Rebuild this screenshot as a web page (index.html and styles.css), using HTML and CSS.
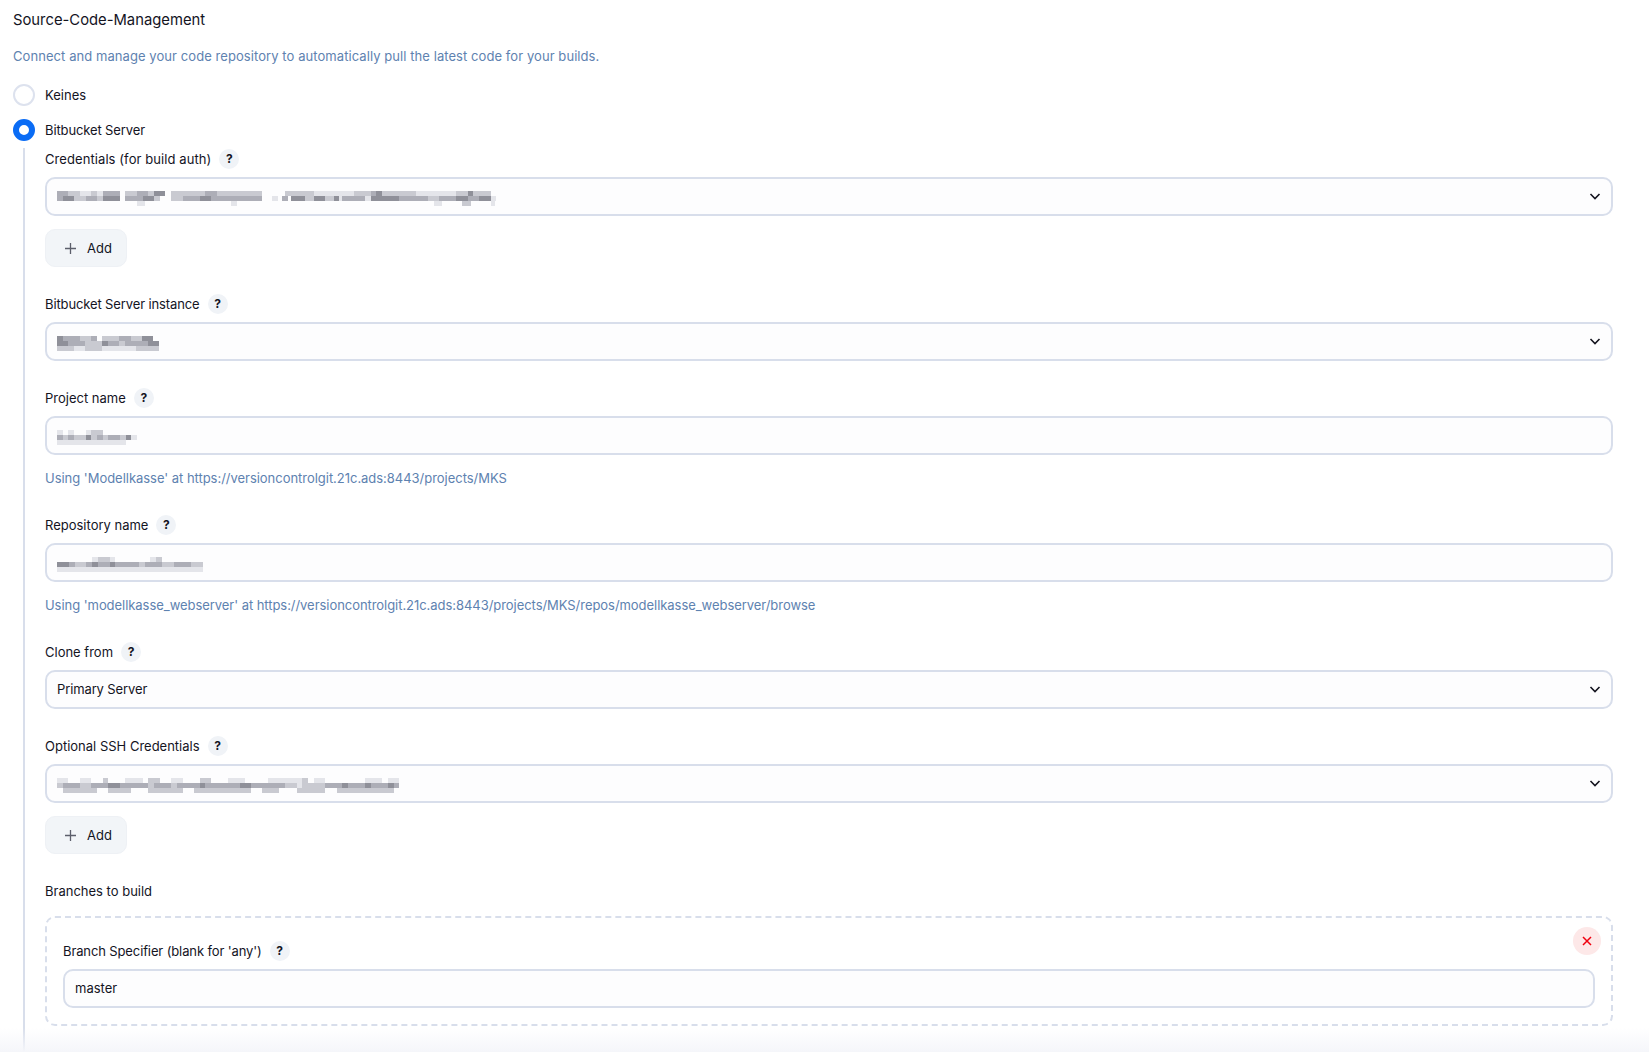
FILE: index.html
```html
<!DOCTYPE html>
<html lang="de">
<head>
<meta charset="utf-8">
<title>Source-Code-Management</title>
<link rel="stylesheet" href="styles.css">
</head>
<body>
<main class="page">
  <h2 class="title">Source-Code-Management</h2>
  <p class="desc">Connect and manage your code repository to automatically pull the latest code for your builds.</p>
  <div class="radio-row"><span class="radio"></span><span>Keines</span></div>
  <div class="radio-row checked"><span class="radio"></span><span class="tight">Bitbucket Server</span></div>
  <div class="nested">
    <div class="field">
      <div class="label"><span class="wide">Credentials (for build auth)</span> <span class="help">?</span></div>
      <div class="control select">
        <svg class="mask" width="445" height="20" viewBox="0 0 78 4" preserveAspectRatio="none">
          <path class="t1" d="M1 2.5h2M8 2.5h3M15 2.5h2M17 1.5h2M25 2.5h2M41 2.5h2.5M45 2.5h2M48.5 2.5h1M56 1.5h1M55 2.5h5M70 2.5h2M72 1.5h1M74 2.5h2"/>
          <path class="t2" d="M0 1.5h2M0 2.5h1M5 2.5h2M8 1.5h3M12 2.5h3M14 1.5h2M26 1.5h2M22 2.5h3M27 2.5h9M39.5 2.5h1M50 2.5h4M55 1.5h1M60 2.5h5M67 2.5h3M72 2.5h2"/>
          <path class="t3" d="M2 1.5h2M6 1.5h1M3 2.5h2M7 2.5h1M12 1.5h2M16 1.5h1M17 2.5h1M20 1.5h6M20 2.5h2M28 1.5h8M40 1.5h5M43.5 2.5h1.5M47 2.5h1.5M52 1.5h3M57 1.5h6M65 2.5h2M70 1.5h2M73 1.5h3M71 3.5h1.5"/>
          <path class="t4" d="M4 1.5h2M7 1.5h1M37.7 2.5h1M45 1.5h7M49.5 2.5h.5M54 2.5h1M63 1.5h7M76 2.5h1M14 3.5h1.5M30.5 3.5h1M66 3.5h1.5M76 3.5h.7"/>
        </svg>
        <svg class="chev" width="12" height="12" viewBox="0 0 12 12"><path d="M1.5 4l4.5 4.5L10.5 4"/></svg>
      </div>
      <button class="add"><svg class="plus" width="13" height="13" viewBox="0 0 13 13"><path d="M6.5 1v11M1 6.5h11"/></svg>Add</button>
    </div>
    <div class="field">
      <div class="label"><span class="tight">Bitbucket Server instance</span> <span class="help">?</span></div>
      <div class="control select">
        <svg class="mask" width="102" height="20" viewBox="0 0 18 4" preserveAspectRatio="none">
          <path class="t1" d="M0 1.5h1M0 2.5h2M8 2.5h1M15 1.5h2M16 2.5h2"/>
          <path class="t2" d="M1 1.5h3M2 2.5h3M6 1.5h1M9 2.5h2M11 1.5h2M12 2.5h4"/>
          <path class="t3" d="M4 1.5h2M8 1.5h3M13 1.5h2M5 2.5h3M11 2.5h1M0 3.5h3M5 3.5h3M14 3.5h4"/>
          <path class="t4" d="M3 3.5h2M8 3.5h6"/>
        </svg>
        <svg class="chev" width="12" height="12" viewBox="0 0 12 12"><path d="M1.5 4l4.5 4.5L10.5 4"/></svg>
      </div>
    </div>
    <div class="field">
      <div class="label">Project name <span class="help">?</span></div>
      <div class="control">
        <svg class="mask" width="80" height="20" viewBox="0 0 14 4" preserveAspectRatio="none">
          <path class="t1" d="M5 2.5h1M12 2.5h1"/>
          <path class="t2" d="M0 2.5h1M2 2.5h1M7 2.5h1M9 2.5h2"/>
          <path class="t3" d="M1 2.5h1M3 2.5h2M6 2.5h1M8 2.5h1M11 2.5h1M6 1.5h2"/>
          <path class="t4" d="M0 1.5h1M2 1.5h1M5 1.5h1M13 2.5h1M0 3.5h12"/>
        </svg>
      </div>
      <p class="hint">Using 'Modellkasse' at https://versioncontrolgit.21c.ads:8443/projects/MKS</p>
    </div>
    <div class="field">
      <div class="label">Repository name <span class="help">?</span></div>
      <div class="control">
        <svg class="mask" width="146" height="20" viewBox="0 0 25 4" preserveAspectRatio="none">
          <path class="t1" d="M0 2.5h2M6 2.5h1M9 2.5h1"/>
          <path class="t2" d="M2 2.5h1M5 2.5h1M7 2.5h2M10 2.5h4M15 2.5h3M20 2.5h3"/>
          <path class="t3" d="M3 2.5h2M14 2.5h1M18 2.5h2M23 2.5h2M7 1.5h2M17 1.5h1"/>
          <path class="t4" d="M6 1.5h1M9 1.5h1M16 1.5h1M0 3.5h25"/>
        </svg>
      </div>
      <p class="hint hint-long">Using 'modellkasse_webserver' at https://versioncontrolgit.21c.ads:8443/projects/MKS/repos/modellkasse_webserver/browse</p>
    </div>
    <div class="field">
      <div class="label">Clone from <span class="help">?</span></div>
      <div class="control select"><span class="tight">Primary Server</span><svg class="chev" width="12" height="12" viewBox="0 0 12 12"><path d="M1.5 4l4.5 4.5L10.5 4"/></svg></div>
    </div>
    <div class="field">
      <div class="label">Optional SSH Credentials <span class="help">?</span></div>
      <div class="control select">
        <svg class="mask" width="348" height="20" viewBox="0 0 61 4" preserveAspectRatio="none">
          <path class="t1" d="M9 2.5h2M25 2.5h1M32 2.5h2M54 2.5h1M50 2.5h1M58 2.5h1"/>
          <path class="t2" d="M1 2.5h3M6 2.5h3M11 2.5h3M14 2.5h2M17 2.5h3M21 2.5h4M26 2.5h6M34 2.5h6M47 2.5h3M51 2.5h3M55 2.5h3M59 2.5h1"/>
          <path class="t3" d="M0 2.5h1M4 2.5h2M16 2.5h1M20 2.5h1M40 2.5h2M43 2.5h4M1 3.5h6M9 3.5h4M16 3.5h6M24 3.5h10M36 3.5h3M42 3.5h5M49 3.5h10M8 1.5h1M16 1.5h2M25 1.5h2M42 1.5h2"/>
          <path class="t4" d="M0 1.5h2M4 1.5h2M12 1.5h3M20 1.5h2M30 1.5h3M37 1.5h6M45 1.5h2M54 1.5h3M58 1.5h2M42 2.5h1"/>
        </svg>
        <svg class="chev" width="12" height="12" viewBox="0 0 12 12"><path d="M1.5 4l4.5 4.5L10.5 4"/></svg>
      </div>
      <button class="add"><svg class="plus" width="13" height="13" viewBox="0 0 13 13"><path d="M6.5 1v11M1 6.5h11"/></svg>Add</button>
    </div>
    <div class="label">Branches to build</div>
    <div class="repeat">
      <button class="close" aria-label="Delete"><svg width="10" height="10" viewBox="0 0 10 10"><path d="M1 1l8 8M9 1l-8 8"/></svg></button>
      <div class="label"><span class="tight">Branch Specifier (blank for 'any')</span> <span class="help">?</span></div>
      <div class="control"><span>master</span></div>
    </div>
  </div>
</main>
<div class="fade"></div>
</body>
</html>
```

FILE: styles.css
```css
* { box-sizing: border-box; }
html, body { margin: 0; height: 100%; }
body { background: #fff; color: #14141f; font: 13px/1.4 Inter, "Noto Sans", sans-serif; overflow: hidden; position: relative; }
.page { padding: 8px 36px 0 13px; }
.title { margin: 0; font-size: 14.8px; font-weight: 400; line-height: 24px; }
.desc { margin: 14px 0 0; color: #5e82b0; line-height: 20px; letter-spacing: .07px; }
.tight { letter-spacing: -.12px; }
.wide { letter-spacing: .08px; }
.radio-row { display: flex; align-items: center; gap: 10px; height: 22px; margin-top: 18px; }
.radio-row.checked { margin-top: 13px; }
.radio { width: 22px; height: 22px; border-radius: 50%; background: #fff; border: 2px solid #dde2ee; }
.checked .radio { border: 6.5px solid #0a6cf5; }
.nested { margin: 7px 0 0 10px; padding: 1px 0 60px 20px; border-left: 2px solid #d8deeb; }
.field { margin-bottom: 27px; }
.label { display: flex; align-items: center; gap: 8px; height: 20px; }
.help { display: grid; place-items: center; width: 20px; height: 20px; border-radius: 50%; background: #f0f3f7; font-size: 12px; font-weight: 700; }
.control { display: flex; align-items: center; justify-content: space-between; height: 39px; margin-top: 8px; padding: 0 10px 0 10px; background: #fdfdfe; border: 2px solid #d8deeb; border-radius: 10px; }
.mask { display: block; margin-bottom: 2px; shape-rendering: crispEdges; filter: blur(.7px); fill: none; stroke-width: 1; }
.t1 { stroke: #8f9099; }
.t2 { stroke: #adaeb7; }
.t3 { stroke: #c9cad1; }
.t4 { stroke: #e4e5ea; }
.chev { margin-bottom: 2px; }
.chev path { fill: none; stroke: #14141f; stroke-width: 1.6; }
.hint { margin: 13px 0 0; color: #5e82b0; line-height: 20px; letter-spacing: -.03px; }
.hint-long { letter-spacing: -.05px; }
.add { display: flex; align-items: center; gap: 10px; height: 38px; margin-top: 13px; padding: 0 14px 0 18px; border: 1px solid #eef1f5; border-radius: 10px; background: #f2f5f8; color: inherit; font: inherit; }
.plus path { stroke: #5c5f6b; stroke-width: 1.3; }
.repeat { position: relative; margin-top: 15px; padding: 23px 16px 16px; border: 2px dashed #d8deeb; border-radius: 10px; }
.close { position: absolute; top: 9px; right: 10px; display: grid; place-items: center; width: 28px; height: 28px; padding: 0; border: 0; border-radius: 50%; background: #fde8e8; }
.close path { stroke: #f0000f; stroke-width: 1.5; }
.fade { position: absolute; left: 0; right: 0; bottom: 0; height: 24px; background: linear-gradient(transparent, #f5f6fa); pointer-events: none; }
```
